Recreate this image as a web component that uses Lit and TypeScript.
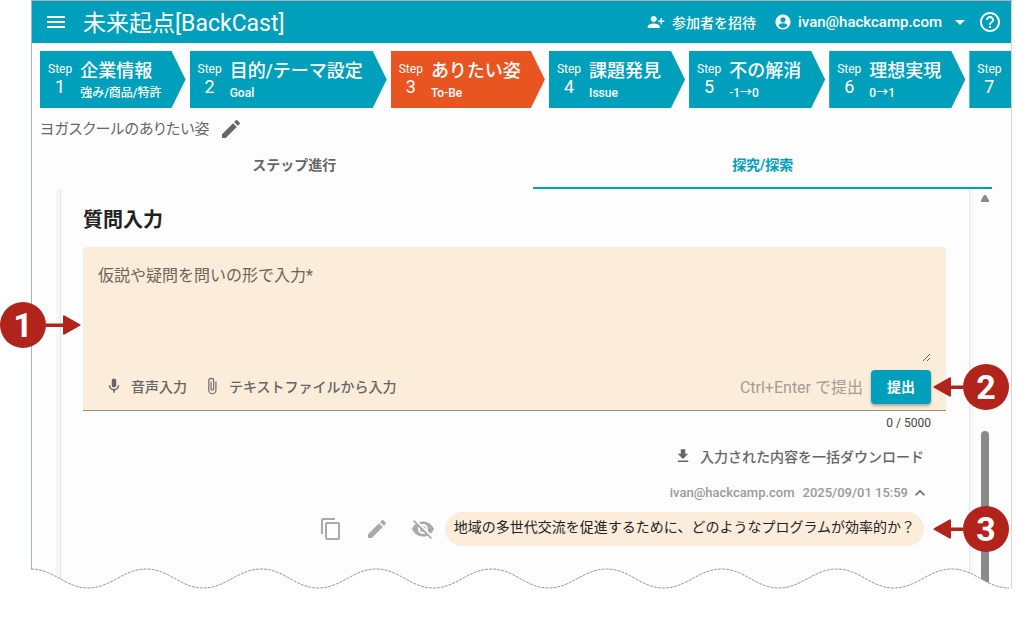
import { LitElement, html, css, svg } from "lit";
import { customElement, property, state } from "lit/decorators.js";
import { classMap } from "lit/directives/class-map.js";

interface Step {
  no: number;
  title: string;
  sub: string;
}

const STEPS: Step[] = [
  { no: 1, title: "企業情報", sub: "強み/商品/特許" },
  { no: 2, title: "目的/テーマ設定", sub: "Goal" },
  { no: 3, title: "ありたい姿", sub: "To-Be" },
  { no: 4, title: "課題発見", sub: "Issue" },
  { no: 5, title: "不の解消", sub: "-1→0" },
  { no: 6, title: "理想実現", sub: "0→1" },
  { no: 7, title: "", sub: "" },
];

const ICONS: Record<string, string> = {
  menu: "M3 6h18v2H3V6m0 5h18v2H3v-2m0 5h18v2H3v-2z",
  invite:
    "M13 8c0-2.21-1.79-4-4-4S5 5.790 5 8s1.790 4 4 4 4-1.790 4-4zm2 2v2h3v3h2v-3h3v-2h-3V7h-2v3h-3zM1 18v2h16v-2c0-2.660-5.330-4-8-4s-8 1.340-8 4z",
  account:
    "M12 2C6.480 2 2 6.480 2 12s4.480 10 10 10 10-4.480 10-10S17.520 2 12 2zm0 3.500c1.930 0 3.500 1.570 3.500 3.500S13.930 12.500 12 12.500 8.500 10.930 8.500 9 10.070 5.500 12 5.500zM12 20c-2.500 0-4.710-1.280-6-3.220.03-1.990 4-3.080 6-3.080s5.970 1.090 6 3.080C16.710 18.720 14.500 20 12 20z",
  down: "M7 10l5 5 5-5z",
  help: "M11 18h2v-2h-2v2zm1-16C6.480 2 2 6.480 2 12s4.480 10 10 10 10-4.480 10-10S17.520 2 12 2zm0 18c-4.410 0-8-3.590-8-8s3.590-8 8-8 8 3.590 8 8-3.590 8-8 8zm0-14c-2.210 0-4 1.790-4 4h2c0-1.100.9-2 2-2s2 .9 2 2c0 2-3 1.750-3 5h2c0-2.250 3-2.500 3-5 0-2.210-1.790-4-4-4z",
  pencil:
    "M3 17.250V21h3.750L17.810 9.940l-3.750-3.750L3 17.250zM20.710 7.040a1 1 0 0 0 0-1.410l-2.340-2.340a1 1 0 0 0-1.410 0l-1.830 1.830 3.750 3.750 1.830-1.830z",
  mic: "M12 2a3 3 0 0 1 3 3v6a3 3 0 0 1-6 0V5a3 3 0 0 1 3-3m7 9c0 3.530-2.610 6.440-6 6.930V21h-2v-3.070c-3.390-.49-6-3.400-6-6.930h2a5 5 0 0 0 10 0h2z",
  clip: "M16.500 6v11.500a4 4 0 0 1-8 0V5a2.500 2.500 0 0 1 5 0v10.500a1 1 0 0 1-2 0V6H10v9.500a2.500 2.500 0 0 0 5 0V5a4 4 0 0 0-8 0v12.500a5.500 5.500 0 0 0 11 0V6h-1.500z",
  download: "M19 9h-4V3H9v6H5l7 7 7-7zM5 18v2h14v-2H5z",
  up: "M7.410 15.410L12 10.830l4.590 4.580L18 14l-6-6-6 6z",
  copy: "M16 1H4c-1.100 0-2 .9-2 2v14h2V3h12V1zm3 4H8c-1.100 0-2 .9-2 2v14c0 1.100.9 2 2 2h11c1.100 0 2-.9 2-2V7c0-1.100-.9-2-2-2zm0 16H8V7h11v14z",
  hide: "M12 7c2.760 0 5 2.240 5 5 0 .65-.13 1.260-.36 1.830l2.920 2.920c1.510-1.260 2.700-2.890 3.430-4.750-1.730-4.390-6-7.500-11-7.500-1.400 0-2.740.25-3.980.7l2.160 2.160C10.740 7.130 11.350 7 12 7zM2 4.270l2.280 2.280.46.46C3.080 8.300 1.780 10.020 1 12c1.730 4.390 6 7.500 11 7.500 1.550 0 3.030-.3 4.380-.84l.42.42L19.730 22 21 20.730 3.270 3 2 4.270zM7.530 9.800l1.550 1.550c-.05.21-.08.43-.08.65 0 1.660 1.340 3 3 3 .22 0 .44-.03.65-.08l1.550 1.550c-.67.33-1.410.53-2.200.53-2.760 0-5-2.240-5-5 0-.79.2-1.530.53-2.200zm4.310-.78l3.150 3.150.02-.16c0-1.660-1.340-3-3-3l-.17.01z",
};

@customElement("ui-icon")
class UiIcon extends LitElement {
  @property() name = "";

  static styles = css`
    :host {
      display: inline-flex;
      flex: none;
      width: 24px;
      height: 24px;
    }
    .glyph {
      width: 100%;
      height: 100%;
      fill: currentColor;
    }
  `;

  render() {
    return html`<svg class="glyph" viewBox="0 0 24 24" aria-hidden="true">
      <path d=${ICONS[this.name] ?? ""} />
    </svg>`;
  }
}

/* Numbered marker with an arrow that points at the element it is anchored to. */
@customElement("call-out")
class CallOut extends LitElement {
  @property() label = "";
  @property({ reflect: true }) side = "right";

  static styles = css`
    :host {
      display: flex;
      align-items: center;
      color: #b1241c;
      pointer-events: none;
    }
    :host([side="right"]) {
      flex-direction: row-reverse;
    }
    :host([side="left"]) .arrow {
      transform: scaleX(-1);
      width: 35px;
    }
    .disc {
      display: flex;
      align-items: center;
      justify-content: center;
      width: 46px;
      height: 46px;
      border-radius: 50%;
      background: #b1241c;
      color: #fff;
      font: 700 34px/46px Roboto, sans-serif;
    }
    .arrow {
      width: 30px;
      height: 20px;
      fill: currentColor;
    }
  `;

  render() {
    const reach = this.side === "left" ? 35 : 30;
    return html`<span class="disc">${this.label}</span
      ><svg class="arrow" viewBox="0 0 ${reach} 20" aria-hidden="true">
        <path d="M1 9.200 16.500 .5q1.500-.6 1.500 1V8.500H${reach}V12H18v6.500q0 1.600-1.500 1L1 10.800q-1.200-.8 0-1.600z" />
      </svg>`;
  }
}

const HALF_WAVES = 17;

function wavePath(): string {
  let d = "M0 1";
  for (let i = 0; i < HALF_WAVES; i++) {
    d += i % 2 === 0 ? "c23 0 34 19 57 19" : "c23 0 35 -19 58 -19";
  }
  return d;
}

@customElement("app-root")
class AppRoot extends LitElement {
  @state() private question = "";
  @state() private activeStep = 3;
  @state() private tab = 1;

  static styles = css`
    :host {
      display: block;
      box-sizing: border-box;
      padding: 0 12px 48px 31px;
      background: #fff;
      color: #222;
      font-family: Roboto, "Noto Sans CJK JP", sans-serif;
      font-size: 14px;
    }
    * {
      box-sizing: border-box;
    }
    button {
      display: inline-flex;
      align-items: center;
      margin: 0;
      padding: 0;
      border: 0;
      background: none;
      color: inherit;
      font: inherit;
      cursor: pointer;
      white-space: nowrap;
    }
    .frame {
      position: relative;
      border: 1px solid #b0b3b5;
      border-bottom: 0;
      border-right-color: #d2d6d8;
      background: #fdfdfd;
    }
    .bar {
      display: flex;
      align-items: center;
      height: 42px;
      padding: 0 9px 0 12px;
      background: #009fbc;
      color: #fff;
      font-weight: 500;
    }
    .brand {
      flex: 1;
      margin: 0 0 0 15px;
      padding-top: 4px;
      font-size: 23px;
      font-weight: 400;
      line-height: 38px;
      white-space: nowrap;
    }
    .bar-item {
      gap: 7px;
      margin-right: 18px;
    }
    .bar-item.user {
      gap: 6px;
      margin-right: 6px;
      font-size: 15px;
    }
    .small {
      width: 18px;
      height: 18px;
    }
    .steps {
      display: flex;
      gap: 4px;
      margin: 8px 0 0 8px;
      overflow: hidden;
    }
    .step {
      flex: none;
      gap: 8px;
      min-width: 136px;
      height: 57px;
      padding: 0 24px 0 8px;
      background: #009fbc;
      color: #fff;
      text-align: left;
      clip-path: polygon(0 0, calc(100% - 14px) 0, 100% 50%, calc(100% - 14px) 100%, 0 100%);
    }
    .step.active {
      background: #e85520;
    }
    .step-no {
      display: flex;
      flex-direction: column;
      align-items: center;
      padding-bottom: 4px;
      font-size: 12px;
      line-height: 18px;
    }
    .step-no b {
      font-size: 18px;
      font-weight: 400;
    }
    .step-text {
      display: flex;
      flex-direction: column;
    }
    .step-title {
      font-size: 18px;
      font-weight: 500;
      line-height: 26px;
    }
    .step-sub {
      font-size: 12px;
      font-weight: 500;
      line-height: 18px;
    }
    .theme {
      display: flex;
      align-items: center;
      gap: 10px;
      height: 42px;
      padding-left: 8px;
      color: #666;
    }
    .theme-name {
      margin: 0;
      font-size: 15px;
      font-weight: 400;
      font-feature-settings: "palt";
      line-height: 24px;
    }
    .tabs {
      display: flex;
      margin: 0 19px 0 23px;
    }
    .tab {
      flex: 23;
      justify-content: center;
      height: 39px;
      padding-bottom: 9px;
      border-bottom: 2px solid transparent;
      color: #666;
      font-weight: 700;
    }
    .tab:first-child {
      flex: 24;
    }
    .tab.active {
      border-bottom-color: #009fbc;
      color: #009fbc;
    }
    .body {
      display: flex;
      padding: 0 19px 0 24px;
    }
    .gutter {
      flex: 1;
      min-width: 0;
      padding: 0 4px;
      background: #f5f8f9;
    }
    .panel {
      padding: 16px 23px 43px 22px;
      border: solid #e3e6e8;
      border-width: 0 1px;
      background: #fdfdfd;
    }
    .rail {
      display: flex;
      flex-direction: column;
      justify-content: space-between;
      width: 8px;
      margin: 6px 3px 0 7px;
    }
    .rail-up {
      width: 8px;
      height: 7px;
      background: #8a8a8a;
      clip-path: polygon(40% 0, 60% 0, 100% 75%, 100% 100%, 0 100%, 0 75%);
    }
    .rail-thumb {
      height: 40%;
      border-radius: 4px 4px 0 0;
      background: #8a8a8a;
    }
    .heading {
      margin: 0 0 12px;
      font-size: 20px;
      font-weight: 700;
      line-height: 30px;
    }
    .card {
      position: relative;
      padding: 17px 15px 6px;
      border-bottom: 1px solid #948f86;
      border-radius: 4px 4px 0 0;
      background: #fcecda;
    }
    .field-label {
      display: block;
      color: #6b645c;
      font-size: 16px;
      line-height: 24px;
    }
    .field {
      display: block;
      width: 100%;
      height: 74px;
      padding: 0;
      border: 0;
      outline: 0;
      background: transparent;
      color: inherit;
      font: 16px/24px Roboto, "Noto Sans CJK JP", sans-serif;
      resize: vertical;
    }
    .actions {
      display: flex;
      align-items: center;
      margin-top: 8px;
      color: #666;
    }
    .tool {
      gap: 8px;
      margin-left: 7px;
      padding-bottom: 3px;
      font-weight: 500;
    }
    .tool + .tool {
      margin-left: 16px;
    }
    .hint {
      margin: 0 8px 0 auto;
      padding-bottom: 3px;
      color: #a39d95;
      font-size: 16px;
    }
    .submit-wrap {
      position: relative;
    }
    .submit {
      justify-content: center;
      height: 34px;
      padding: 0 16px 3px;
      border-radius: 4px;
      background: #009fbc;
      color: #fff;
      font-weight: 700;
      box-shadow: 0 2px 3px rgba(0, 0, 0, 0.3);
    }
    .counter {
      margin: 4px 15px 0 0;
      color: #444;
      font-size: 12px;
      line-height: 16px;
      text-align: right;
    }
    .history {
      display: flex;
      flex-direction: column;
      align-items: flex-end;
      margin-right: 22px;
    }
    .download {
      gap: 8px;
      height: 24px;
      margin-top: 13px;
      color: #666;
      font-weight: 500;
    }
    .meta {
      display: flex;
      align-items: center;
      gap: 8px;
      margin: 15px 0 9px;
      color: #999;
      font-size: 13px;
      font-weight: 500;
      line-height: 20px;
    }
    .fold {
      margin: 0 -6px 0 -6px;
      color: #666;
    }
    .fold-icon {
      width: 20px;
      height: 20px;
    }
    .entry {
      position: relative;
      display: flex;
      align-items: center;
      color: #aaa;
    }
    .entry-action {
      margin-right: 22px;
    }
    .entry-action.last {
      margin-right: 10px;
    }
    .bubble {
      margin: 0;
      padding: 0 9px 3px;
      border-radius: 17px;
      background: #fcecda;
      color: #222;
      line-height: 31px;
      font-weight: 400;
    }
    .wave {
      position: absolute;
      left: -1px;
      bottom: -1px;
      width: calc(100% + 2px);
      height: 22px;
    }
    .wave-mask {
      fill: #fff;
    }
    .wave-line {
      fill: none;
      stroke: #999;
      stroke-width: 1;
      stroke-dasharray: 3 1;
      vector-effect: non-scaling-stroke;
    }
    .mark {
      position: absolute;
      z-index: 1;
      top: 50%;
      transform: translateY(-50%);
    }
    .mark.on-field {
      top: 48%;
      right: calc(100% + 2px);
    }
    .mark.on-submit {
      left: calc(100% + 2px);
    }
    .mark.on-entry {
      left: calc(100% + 9px);
    }
  `;

  private renderStep(step: Step) {
    return html`<button
      class=${classMap({ step: true, active: step.no === this.activeStep })}
      @click=${() => (this.activeStep = step.no)}
    >
      <span class="step-no">Step<b>${step.no}</b></span>
      <span class="step-text">
        <span class="step-title">${step.title}</span>
        <span class="step-sub">${step.sub}</span>
      </span>
    </button>`;
  }

  private renderTab(label: string, index: number) {
    return html`<button
      role="tab"
      aria-selected=${this.tab === index}
      class=${classMap({ tab: true, active: this.tab === index })}
      @click=${() => (this.tab = index)}
    >${label}</button>`;
  }

  render() {
    const wave = wavePath();
    return html`
      <div class="frame">
        <header class="bar">
          <button><ui-icon name="menu"></ui-icon></button>
          <h1 class="brand">未来起点[BackCast]</h1>
          <button class="bar-item"><ui-icon class="small" name="invite"></ui-icon>参加者を招待</button>
          <button class="bar-item user">
            <ui-icon class="small" name="account"></ui-icon>ivan@hackcamp.com<ui-icon name="down"></ui-icon>
          </button>
          <button><ui-icon name="help"></ui-icon></button>
        </header>

        <nav class="steps">${STEPS.map((s) => this.renderStep(s))}</nav>

        <div class="theme">
          <p class="theme-name">ヨガスクールのありたい姿</p>
          <button><ui-icon name="pencil"></ui-icon></button>
        </div>

        <div class="tabs" role="tablist">
          ${this.renderTab("ステップ進行", 0)}${this.renderTab("探究/探索", 1)}
        </div>

        <div class="body">
          <div class="gutter">
            <main class="panel">
              <h2 class="heading">質問入力</h2>
              <div class="card">
                <label class="field-label" for="question">仮説や疑問を問いの形で入力*</label>
                <textarea
                  id="question"
                  class="field"
                  maxlength="5000"
                  .value=${this.question}
                  @input=${(e: Event) => (this.question = (e.target as HTMLTextAreaElement).value)}
                ></textarea>
                <div class="actions">
                  <button class="tool"><ui-icon class="small" name="mic"></ui-icon>音声入力</button>
                  <button class="tool"><ui-icon class="small" name="clip"></ui-icon>テキストファイルから入力</button>
                  <span class="hint">Ctrl+Enter で提出</span>
                  <div class="submit-wrap">
                    <button class="submit">提出</button>
                    <call-out class="mark on-submit" label="2"></call-out>
                  </div>
                </div>
                <call-out class="mark on-field" side="left" label="1"></call-out>
              </div>
              <div class="counter">${this.question.length} / 5000</div>

              <section class="history">
                <button class="download">
                  <ui-icon class="small" name="download"></ui-icon>入力された内容を一括ダウンロード
                </button>
                <div class="meta">
                  <span>ivan@hackcamp.com</span>
                  <time>2025/09/01 15:59</time>
                  <button class="fold"><ui-icon class="fold-icon" name="up"></ui-icon></button>
                </div>
                <div class="entry">
                  <button class="entry-action"><ui-icon name="copy"></ui-icon></button>
                  <button class="entry-action"><ui-icon name="pencil"></ui-icon></button>
                  <button class="entry-action last"><ui-icon name="hide"></ui-icon></button>
                  <p class="bubble">地域の多世代交流を促進するために、どのようなプログラムが効率的か？</p>
                  <call-out class="mark on-entry" label="3"></call-out>
                </div>
              </section>
            </main>
          </div>
          <div class="rail" aria-hidden="true">
            <span class="rail-up"></span>
            <span class="rail-thumb"></span>
          </div>
        </div>

        <svg class="wave" viewBox="0 0 980 22" preserveAspectRatio="none" aria-hidden="true">
          ${svg`<path class="wave-mask" d="${wave}V22H0z" /><path class="wave-line" d=${wave} />`}
        </svg>
      </div>
    `;
  }
}
